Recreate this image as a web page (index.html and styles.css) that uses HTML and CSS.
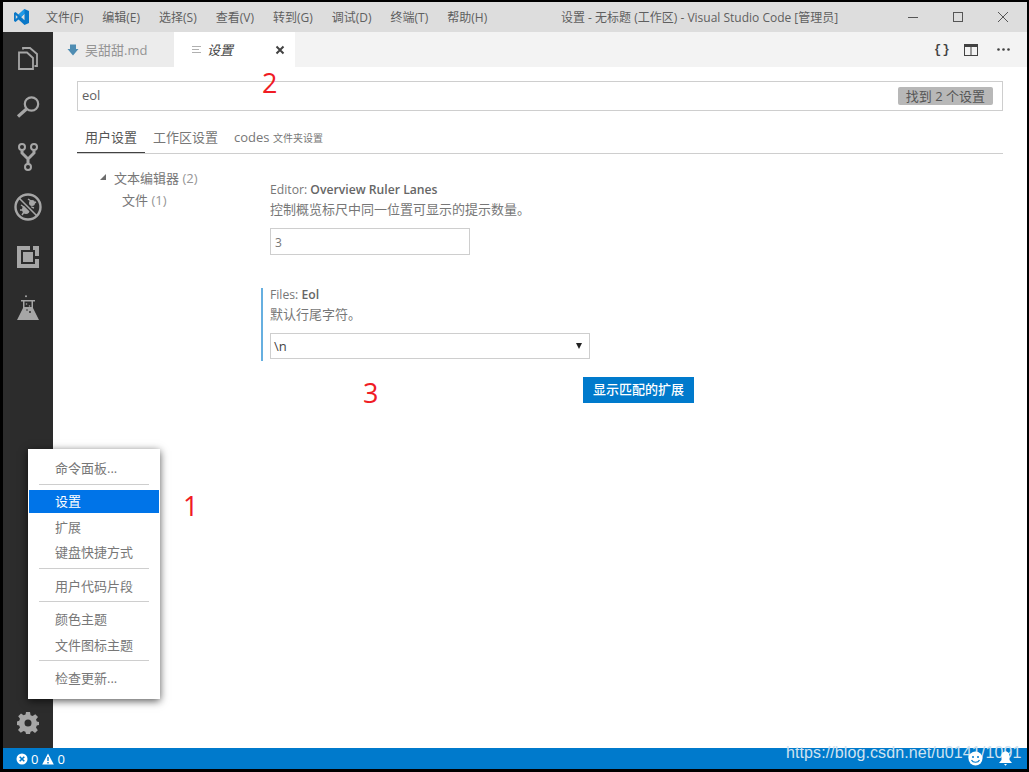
FILE: index.html
```html
<!DOCTYPE html>
<html lang="zh-CN">
<head>
  <meta charset="UTF-8" />
  <title>设置 - 无标题 (工作区) - Visual Studio Code [管理员]</title>
  <link rel="stylesheet" href="styles.css">
</head>
<body>
  <div class="window">

    <!-- title bar -->
    <div class="titlebar">
      <svg class="app-logo" width="15" height="16" viewBox="0 0 15 16">
        <path fill="#0a78c8" d="M10.5 0L15 2V14L10.5 16L4.5 10.5L1.5 13L0 12V4L1.5 3L4.5 5.5ZM10.5 4.8L7 8L10.5 11.2ZM1.8 6V10L3.8 8Z"/>
        <path fill="#1f9ae8" d="M10.5 0V4.8L7 8L4.5 5.5Z"/>
      </svg>
      <div class="menu-items">
        <span>文件(F)</span><span>编辑(E)</span><span>选择(S)</span><span>查看(V)</span><span>转到(G)</span><span>调试(D)</span><span>终端(T)</span><span>帮助(H)</span>
      </div>
      <div class="window-title">设置 - 无标题 (工作区) - Visual Studio Code [管理员]</div>
      <div class="window-controls">
        <svg width="12" height="12" viewBox="0 0 12 12"><path d="M1 6.5H11" stroke="#555" fill="none"/></svg>
        <svg width="12" height="12" viewBox="0 0 12 12"><rect x="1.5" y="1.5" width="9" height="9" stroke="#555" fill="none"/></svg>
        <svg width="12" height="12" viewBox="0 0 12 12"><path d="M1 1L11 11M11 1L1 11" stroke="#555" fill="none"/></svg>
      </div>
    </div>

    <div class="workbench">

      <!-- activity bar -->
      <div class="activitybar">
        <div class="activity-top">
          <div class="activity-item">
            <svg class="icon-files" width="20" height="23" viewBox="0 0 20 23" fill="none" stroke="#a6a6a6" stroke-width="1.8">
              <path d="M5 2.5V1H12L19 7V19H16.5"/>
              <path d="M1 5.5H9L15 11V22H1Z"/>
            </svg>
          </div>
          <div class="activity-item">
            <svg width="24" height="22" viewBox="0 0 24 22" fill="none" stroke="#a6a6a6">
              <circle cx="15.5" cy="8" r="6.7" stroke-width="2.2"/>
              <path d="M10.5 13L2 20.5" stroke-width="3.2"/>
            </svg>
          </div>
          <div class="activity-item">
            <svg width="20" height="28" viewBox="0 0 20 28" fill="none" stroke="#a6a6a6" stroke-width="2">
              <circle cx="4" cy="4" r="3"/>
              <circle cx="16" cy="4" r="3"/>
              <circle cx="10" cy="24" r="3"/>
              <path d="M4 7.5V10L10 16L16 10V7.5M10 16V21" stroke-width="3"/>
            </svg>
          </div>
          <div class="activity-item">
            <svg width="28" height="28" viewBox="0 0 28 28" fill="none" stroke="#a6a6a6">
              <ellipse cx="12" cy="16.5" rx="4" ry="4.5" fill="#a6a6a6" stroke="none"/>
              <circle cx="18" cy="10" r="3" fill="#a6a6a6" stroke="none"/>
              <path d="M7 12L10 14M6 17H9M8 22L10 19M14 6L17 8M22 9L20 10M20 15L17 14" stroke-width="1.5"/>
              <path d="M5 5L23 23" stroke="#2c2c2c" stroke-width="4"/>
              <circle cx="14" cy="14" r="12.5" stroke-width="2.4"/>
              <path d="M5 5L23 23" stroke-width="1.6"/>
            </svg>
          </div>
          <div class="activity-item">
            <svg width="22" height="22" viewBox="0 0 22 22">
              <path fill="#a6a6a6" d="M0 0H13V4H4V18H18V13H22V22H0ZM16 0H22V10H18V4H16ZM6 6H16V16H6Z"/>
            </svg>
          </div>
          <div class="activity-item">
            <svg width="22" height="25" viewBox="0 0 22 25">
              <path fill="#a6a6a6" d="M4 5H18V6.5H16V13L22 25H0L6 13V6.5H4Z"/>
              <path fill="#2c2c2c" d="M7.5 6.5H14.5V12H7.5Z"/>
              <circle cx="9" cy="1.2" r="1" fill="#a6a6a6"/>
              <circle cx="9.5" cy="9" r=".8" fill="#a6a6a6"/>
              <circle cx="12.5" cy="11" r=".8" fill="#a6a6a6"/>
              <circle cx="13" cy="17" r="1" fill="#2c2c2c"/>
              <circle cx="10" cy="15" r=".8" fill="#2c2c2c"/>
            </svg>
          </div>
        </div>
        <svg class="gear" width="22" height="22" viewBox="0 0 22 22">
          <path fill="#a6a6a6" fill-rule="evenodd" d="M9 0H13L13.6 3.2L15.6 4L18.3 2.2L21 5L19 7.6L19.8 9.5L22 10V13L19.8 13.6L19 15.5L20.8 18.2L18 21L15.4 19L13.6 19.8L13 22H9L8.4 19.8L6.5 19L3.8 20.8L1 18L3 15.4L2.2 13.5L0 13V9.5L2.2 8.8L3 6.8L1.2 4.2L4 1.4L6.6 3.2L8.5 2.4ZM11 7.5A3.5 3.5 0 1 0 11 14.5A3.5 3.5 0 1 0 11 7.5Z"/>
        </svg>
      </div>

      <!-- editor -->
      <div class="editor">
        <div class="tabs">
          <div class="tab">
            <svg width="12" height="12" viewBox="0 0 12 12"><path fill="#4f8db3" d="M3 0.5H9V5H11.5L6 11.5L0.5 5H3Z"/></svg>
            <span>吴甜甜.md</span>
          </div>
          <div class="tab tab-active">
            <svg width="12" height="12" viewBox="0 0 12 12"><path stroke="#b0b0b0" fill="none" d="M1 2.5H10M1 5.5H8M1 8.5H10"/></svg>
            <span class="tab-name">设置</span>
            <svg class="tab-close" width="10" height="10" viewBox="0 0 10 10"><path stroke="#424242" stroke-width="2" d="M1.5 1.5L8.5 8.5M8.5 1.5L1.5 8.5"/></svg>
          </div>
          <div class="tab-actions">
            <span class="braces">{ }</span>
            <svg width="14" height="12" viewBox="0 0 14 12"><path fill="#424242" fill-rule="evenodd" d="M0 0H14V12H0ZM1 3V11H6.5V3ZM7.5 3V11H13V3Z"/></svg>
            <svg width="13" height="3" viewBox="0 0 13 3"><g fill="#424242"><circle cx="1.5" cy="1.5" r="1.3"/><circle cx="6.5" cy="1.5" r="1.3"/><circle cx="11.5" cy="1.5" r="1.3"/></g></svg>
          </div>
        </div>

        <div class="settings">
          <div class="search-box">
            <span class="search-value">eol</span>
            <span class="search-count">找到 2 个设置</span>
          </div>

          <div class="scope-tabs">
            <span class="scope scope-active">用户设置</span>
            <span class="scope">工作区设置</span>
            <span class="scope">codes <small>文件夹设置</small></span>
          </div>

          <div class="settings-body">
            <div class="toc">
              <div class="toc-group"><i class="twist"></i>文本编辑器 <em>(2)</em></div>
              <div class="toc-child">文件 <em>(1)</em></div>
            </div>

            <div class="settings-list">
              <div class="setting">
                <div class="setting-title">Editor: <b>Overview Ruler Lanes</b></div>
                <div class="setting-desc">控制概览标尺中同一位置可显示的提示数量。</div>
                <div class="num-input">3</div>
              </div>

              <div class="setting setting-modified">
                <div class="setting-title">Files: <b>Eol</b></div>
                <div class="setting-desc">默认行尾字符。</div>
                <div class="select-box"><span>\n</span><i class="caret"></i></div>
              </div>

              <div class="ext-row">
                <button class="ext-btn">显示匹配的扩展</button>
              </div>
            </div>
          </div>
        </div>
      </div>
    </div>

    <!-- status bar -->
    <div class="statusbar">
      <div class="status-left">
        <svg width="12" height="12" viewBox="0 0 12 12"><circle cx="6" cy="6" r="5.5" fill="#fff"/><path d="M3.7 3.7L8.3 8.3M8.3 3.7L3.7 8.3" stroke="#007acc" stroke-width="1.6"/></svg>
        <span>0</span>
        <svg class="warn-icon" width="12" height="12" viewBox="0 0 12 12"><path fill="#fff" d="M6 0.5L11.8 11.5H0.2Z"/><path d="M6 4V8M6 9V10.5" stroke="#007acc" stroke-width="1.4"/></svg>
        <span>0</span>
      </div>
    </div>

    <!-- gear menu, opened over the activity bar -->
    <div class="context-menu">
      <div class="menu-row">命令面板...</div>
      <div class="menu-sep"></div>
      <div class="menu-row menu-row-active">设置</div>
      <div class="menu-row">扩展</div>
      <div class="menu-row">键盘快捷方式</div>
      <div class="menu-sep"></div>
      <div class="menu-row">用户代码片段</div>
      <div class="menu-sep"></div>
      <div class="menu-row">颜色主题</div>
      <div class="menu-row">文件图标主题</div>
      <div class="menu-sep"></div>
      <div class="menu-row">检查更新...</div>
    </div>

    <!-- hand-added numbers on the screenshot -->
    <span class="mark mark-1">1</span>
    <span class="mark mark-2">2</span>
    <span class="mark mark-3">3</span>
    <span class="watermark">https://blog.csdn.net/u0141/1091</span>

    <!-- these two sit on top of the watermark -->
    <div class="status-right">
      <svg width="15" height="15" viewBox="0 0 15 15"><circle cx="7.5" cy="7.5" r="7" fill="#fff"/><circle cx="5" cy="6" r="1" fill="#007acc"/><circle cx="10" cy="6" r="1" fill="#007acc"/><path d="M3.5 9C5 12 10 12 11.5 9" stroke="#007acc" stroke-width="1.2" fill="none"/></svg>
      <svg width="15" height="15" viewBox="0 0 15 15"><path fill="#fff" d="M7.5 0.5C10.5 0.5 11.5 3 11.5 5.5V9L14 12H1L3.5 9V5.5C3.5 3 4.5 0.5 7.5 0.5ZM6 13H9L7.5 14.8Z"/></svg>
    </div>
  </div>
</body>
</html>
```

FILE: styles.css
```css
* {
  margin: 0;
  padding: 0;
  box-sizing: border-box;
}

body {
  background: #000;
  font-family: "Open Sans", "Noto Sans CJK SC", sans-serif;
  font-size: 13px;
  color: #777;
}

.window {
  position: relative;
  width: 1029px;
  height: 772px;
  border-style: solid;
  border-color: #000;
  border-width: 2px 2px 3px 3px;
  display: flex;
  flex-direction: column;
  background: #fff;
  overflow: hidden;
}

/* title bar */
.titlebar {
  height: 30px;
  background: #dddddd;
  display: flex;
  align-items: center;
  position: relative;
  flex-shrink: 0;
  font-size: 12px;
  color: #5f5f5f;
}

.app-logo {
  margin-left: 11px;
}

.menu-items {
  display: flex;
  gap: 19px;
  margin-left: 17px;
}

.window-title {
  position: absolute;
  left: 558px;
  top: 7px;
  line-height: 17px;
  white-space: nowrap;
}

.window-controls {
  margin-left: auto;
  display: flex;
  gap: 33px;
  margin-right: 18px;
}

/* main area */
.workbench {
  flex: 1;
  display: flex;
  min-height: 0;
}

.activitybar {
  width: 50px;
  background: #2c2c2c;
  display: flex;
  flex-direction: column;
  align-items: center;
  justify-content: space-between;
  flex-shrink: 0;
}

.activity-item {
  width: 50px;
  height: 50px;
  display: flex;
  align-items: center;
  justify-content: center;
}

.icon-files {
  margin-top: 2px;
}

.gear {
  margin-bottom: 14px;
}

.editor {
  flex: 1;
  display: flex;
  flex-direction: column;
}

.tabs {
  height: 35px;
  background: #f3f3f3;
  display: flex;
  align-items: center;
}

.tab {
  width: 121px;
  height: 35px;
  background: #ececec;
  display: flex;
  align-items: center;
  gap: 6px;
  padding-left: 14px;
  color: #949494;
}

.tab-active {
  background: #fff;
  color: #444;
  padding-left: 17px;
  gap: 4px;
}

.tab-name {
  font-style: italic;
}

.tab-close {
  margin-left: auto;
  margin-right: 10px;
}

.tab-actions {
  margin-left: auto;
  display: flex;
  align-items: center;
  gap: 19px;
  padding-right: 17px;
}

.braces {
  font-family: "Liberation Mono", monospace;
  font-size: 12px;
  font-weight: bold;
  color: #424242;
  letter-spacing: -3px;
  width: 11px;
  white-space: nowrap;
}

.settings {
  flex: 1;
  padding: 14px 24px 0;
}

.search-box {
  height: 30px;
  border: 1px solid #cecece;
  display: flex;
  align-items: center;
  justify-content: space-between;
  padding: 0 9px 2px 4px;
}

.search-value {
  color: #616161;
}

.search-count {
  background: #b8b8b8;
  color: #555;
  height: 18px;
  line-height: 18px;
  padding: 0 8px;
  border-radius: 2px;
  margin-top: 2px;
}

.scope-tabs {
  display: flex;
  align-items: flex-end;
  margin-top: 14px;
  height: 29px;
  border-bottom: 1px solid #cecece;
}

.scope {
  padding: 0 8px;
  height: 29px;
  line-height: 26px;
  color: #777;
}

.scope-active {
  color: #555;
  border-bottom: 1px solid #424242;
}

.scope small {
  font-size: 10px;
}

.settings-body {
  display: flex;
}

.toc {
  width: 193px;
  padding-top: 13px;
  flex-shrink: 0;
}

.toc-group {
  padding-left: 37px;
  line-height: 22px;
  position: relative;
}

.toc-child {
  padding-left: 45px;
  line-height: 22px;
}

.toc em {
  font-style: normal;
  color: #969696;
}

.twist {
  position: absolute;
  left: 23px;
  top: 7px;
  width: 0;
  height: 0;
  border-left: 6px solid transparent;
  border-bottom: 6px solid #6c6c6c;
}

.settings-list {
  flex: 1;
  padding-top: 26px;
}

.setting-title {
  line-height: 19px;
  font-size: 12.2px;
  color: #777;
}

.setting-title b {
  font-weight: 600;
  color: #666;
}

.setting-desc {
  line-height: 20px;
}

.num-input {
  width: 200px;
  height: 27px;
  margin-top: 9px;
  border: 1px solid #cecece;
  line-height: 27px;
  padding-left: 4px;
  font-size: 12px;
}

.setting-modified {
  margin-top: 33px;
  margin-left: -9px;
  padding-left: 7px;
  border-left: 2px solid #66afe0;
  width: 330px;
  height: 73px;
}

.setting-modified .setting-title {
  line-height: 13px;
  margin-bottom: 3px;
}

.select-box {
  width: 320px;
  height: 26px;
  margin-top: 9px;
  border: 1px solid #cecece;
  display: flex;
  align-items: center;
  justify-content: space-between;
  padding: 0 7px 0 3px;
  color: #444;
}

.caret {
  width: 0;
  height: 0;
  border-left: 3px solid transparent;
  border-right: 3px solid transparent;
  border-top: 6px solid #222;
}

.ext-row {
  margin-top: 16px;
  padding-left: 313px;
}

.ext-btn {
  width: 111px;
  height: 26px;
  background: #007acc;
  color: #fff;
  border: none;
  padding-bottom: 3px;
  font-family: inherit;
  font-size: 13px;
  font-weight: 500;
}

/* status bar */
.statusbar {
  height: 21px;
  background: #007acc;
  color: #fff;
  font-size: 13px;
  display: flex;
  align-items: center;
  flex-shrink: 0;
}

.status-left {
  display: flex;
  align-items: center;
  gap: 3px;
  padding-left: 13px;
}

.warn-icon {
  margin-left: 1px;
}

/* over the watermark, at the right end of the status bar */
.status-right {
  position: absolute;
  right: 14px;
  bottom: 3px;
  display: flex;
  align-items: center;
  gap: 15px;
}

/* menu */
.context-menu {
  position: absolute;
  left: 25px;
  top: 447px;
  width: 132px;
  height: 250px;
  background: #fff;
  padding-top: 7px;
  box-shadow: 0 2px 8px #000a;
}

.menu-row {
  height: 25.5px;
  line-height: 25px;
  margin: 0 1px;
  padding-left: 26px;
}

.menu-row-active {
  background: #0074e8;
  color: #fff;
  height: 23px;
  line-height: 23px;
  margin-bottom: 2px;
}

.menu-sep {
  height: 1px;
  background: #cecece;
  margin: 2px 11px 5px;
}

/* annotations */
.mark {
  position: absolute;
  color: #f01c24;
  font-family: "Open Sans", sans-serif;
  font-size: 27px;
  line-height: 32px;
}

.mark-1 {
  left: 180px;
  top: 488px;
}

.mark-2 {
  left: 259px;
  top: 65px;
}

.mark-3 {
  left: 360px;
  top: 375px;
}

.watermark {
  position: absolute;
  left: 783px;
  top: 741px;
  color: #cfe2f0;
  font-family: "Liberation Sans", sans-serif;
  font-size: 16px;
  letter-spacing: 0.1px;
  line-height: 20px;
  white-space: nowrap;
}
```
